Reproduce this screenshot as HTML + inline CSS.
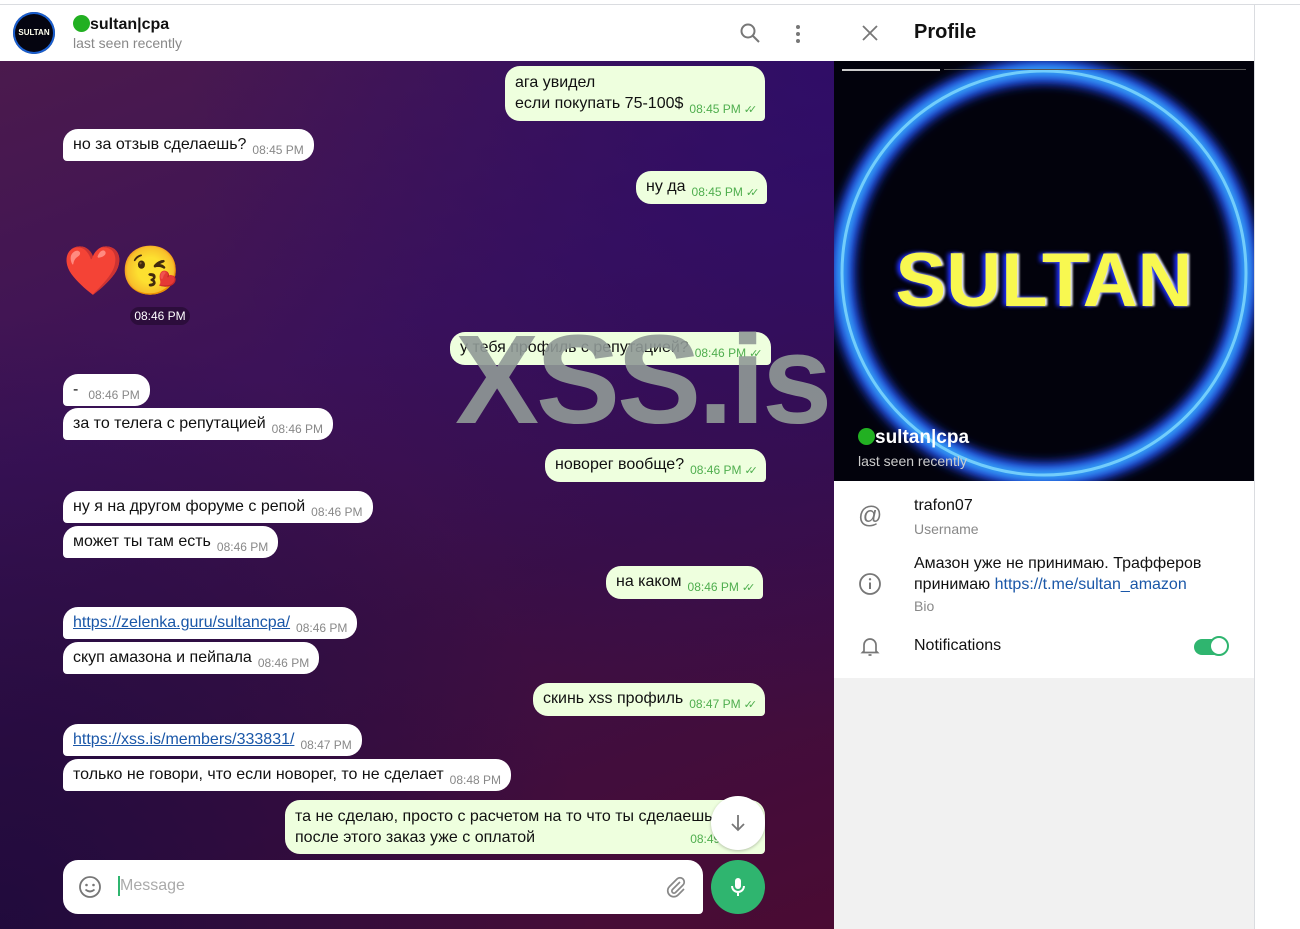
<!DOCTYPE html>
<html><head><meta charset="utf-8">
<style>
*{box-sizing:border-box;margin:0;padding:0}
body{width:1300px;height:929px;overflow:hidden;background:#fff;font-family:"Liberation Sans",Roboto,sans-serif;position:relative}
.abs{position:absolute}
#chat{left:0;top:61px;width:834px;height:868px;background:linear-gradient(160deg,#4b1a4d 0%,#3c1258 35%,#3a0f45 60%,#4a0b33 100%);overflow:hidden}
#chat::before{content:"";position:absolute;inset:0;background:radial-gradient(ellipse at 100% 0%,rgba(40,10,110,.7),transparent 55%),radial-gradient(ellipse at 0% 100%,rgba(25,10,60,.8),transparent 50%)}
.b{position:absolute;font-size:16px;line-height:21px;color:#111;padding:5px 10px;border-radius:15px;white-space:nowrap}
.in{background:#fff;border-bottom-left-radius:4px}
.out{background:#eeffde;border-bottom-right-radius:4px;padding-right:13px}
.t{font-size:12px;color:#888;margin-left:6px;position:relative;top:5px}
.out .t{color:#4fae4e}
.ck{font-size:11px;letter-spacing:-5px;margin-left:3px}
a{color:#1a57a8;text-decoration:underline}
.wm{position:absolute;left:455px;top:317px;font:bold 126px "Liberation Sans",sans-serif;color:#909a97;opacity:.9;letter-spacing:-3px;line-height:126px}
</style></head><body>
<div class="abs" style="left:0;top:4px;width:1300px;height:1px;background:#dadce0"></div>
<div class="abs" style="left:0;top:5px;width:834px;height:56px;background:#fff"></div>
<div class="abs" style="left:13px;top:12px;width:42px;height:42px;border-radius:50%;background:#050510;box-shadow:0 0 0 2px #1a5fd0 inset;color:#ffe;font:bold 8px 'Liberation Sans';text-align:center;line-height:42px">SULTAN</div>
<div class="abs" style="left:73px;top:15px;font-size:16px;font-weight:bold;color:#111"><span style="display:inline-block;width:17px;height:17px;border-radius:50%;background:#22b022;vertical-align:-3px"></span>sultan|cpa</div>
<div class="abs" style="left:73px;top:35px;font-size:14px;color:#888">last seen recently</div>
<svg class="abs" style="left:739px;top:22px" width="22" height="22" viewBox="0 0 22 22"><circle cx="9" cy="9" r="6.5" fill="none" stroke="#777" stroke-width="2"/><path d="M14 14l6 6" stroke="#777" stroke-width="2"/></svg>
<div class="abs" style="left:796px;top:25px;width:4px;height:4px;border-radius:50%;background:#777;box-shadow:0 7px 0 #777,0 14px 0 #777"></div>

<div id="chat" class="abs"></div>
<div class="b out" style="left:505px;top:66px;padding-top:6px">ага увидел<br>если покупать 75-100$<span class="t">08:45 PM<span class="ck">✓✓</span></span></div>
<div class="b in" style="left:63px;top:129px">но за отзыв сделаешь?<span class="t">08:45 PM</span></div>
<div class="b out" style="left:636px;top:171px">ну да<span class="t">08:45 PM<span class="ck">✓✓</span></span></div>
<div class="abs" style="left:63px;top:240px;font-size:48px;line-height:62px;font-family:'Noto Color Emoji',sans-serif;letter-spacing:-2px">❤️😘</div>
<div class="abs" style="left:130px;top:307px;width:60px;height:18px;border-radius:9px;background:rgba(0,0,0,.3);color:#fff;font-size:12px;text-align:center;line-height:18px">08:46 PM</div>
<div class="b out" style="left:450px;top:332px">у тебя профиль с репутацией?<span class="t">08:46 PM<span class="ck">✓✓</span></span></div>
<div class="b in" style="left:63px;top:374px">-<span class="t" style="margin-left:10px">08:46 PM</span></div>
<div class="b in" style="left:63px;top:408px">за то телега с репутацией<span class="t">08:46 PM</span></div>
<div class="b out" style="left:545px;top:449px">новорег вообще?<span class="t">08:46 PM<span class="ck">✓✓</span></span></div>
<div class="b in" style="left:63px;top:491px">ну я на другом форуме с репой<span class="t">08:46 PM</span></div>
<div class="b in" style="left:63px;top:526px">может ты там есть<span class="t">08:46 PM</span></div>
<div class="b out" style="left:606px;top:566px">на каком<span class="t">08:46 PM<span class="ck">✓✓</span></span></div>
<div class="b in" style="left:63px;top:607px"><a>https://zelenka.guru/sultancpa/</a><span class="t">08:46 PM</span></div>
<div class="b in" style="left:63px;top:642px">скуп амазона и пейпала<span class="t">08:46 PM</span></div>
<div class="b out" style="left:533px;top:683px">скинь xss профиль<span class="t">08:47 PM<span class="ck">✓✓</span></span></div>
<div class="b in" style="left:63px;top:724px"><a>https://xss.is/members/333831/</a><span class="t">08:47 PM</span></div>
<div class="b in" style="left:63px;top:759px">только не говори, что если новорег, то не сделает<span class="t">08:48 PM</span></div>
<div class="b out" style="left:285px;top:800px;width:480px;height:54px;padding-top:6px">та не сделаю, просто с расчетом на то что ты сделаешь<br>после этого заказ уже с оплатой<span style="position:absolute;right:12px;bottom:3px;font-size:12px;color:#4fae4e">08:49 PM<span class="ck">✓✓</span></span></div>
<div class="wm">XSS.is</div>
<div class="abs" style="left:711px;top:796px;width:54px;height:54px;border-radius:50%;background:#fff;box-shadow:0 1px 3px rgba(0,0,0,.25)"></div>
<svg class="abs" style="left:726px;top:811px" width="24" height="24" viewBox="0 0 24 24"><path d="M12 4v15M6 13l6 6 6-6" fill="none" stroke="#777" stroke-width="1.8"/></svg>
<div class="abs" style="left:63px;top:860px;width:640px;height:54px;background:#fff;border-radius:15px;border-bottom-right-radius:4px"></div>
<svg class="abs" style="left:78px;top:875px" width="24" height="24" viewBox="0 0 24 24"><circle cx="12" cy="12" r="10" fill="none" stroke="#777" stroke-width="1.8"/><circle cx="8.5" cy="10" r="1.3" fill="#777"/><circle cx="15.5" cy="10" r="1.3" fill="#777"/><path d="M7.5 14.5q4.5 4 9 0" fill="none" stroke="#777" stroke-width="1.8"/></svg>
<div class="abs" style="left:118px;top:876px;width:1.5px;height:20px;background:#2fb56f"></div>
<div class="abs" style="left:120px;top:877px;font-size:16px;color:#aaa">Message</div>
<svg class="abs" style="left:664px;top:875px" width="24" height="24" viewBox="0 0 24 24"><path d="M16 7l-7.5 7.5a2 2 0 0 0 3 3L19 10a4 4 0 0 0-6-6l-7.5 7.5a6 6 0 0 0 8.5 8.5L20 14" fill="none" stroke="#888" stroke-width="1.7"/></svg>
<div class="abs" style="left:711px;top:860px;width:54px;height:54px;border-radius:50%;background:#2fb56f"></div>
<svg class="abs" style="left:726px;top:875px" width="24" height="24" viewBox="0 0 24 24"><rect x="9" y="3" width="6" height="11" rx="3" fill="#fff"/><path d="M6 11a6 6 0 0 0 12 0M12 17v4" fill="none" stroke="#fff" stroke-width="2"/></svg>

<div class="abs" style="left:834px;top:5px;width:420px;height:924px;background:#f1f1f1"></div>
<div class="abs" style="left:1254px;top:5px;width:1px;height:924px;background:#dadce0"></div>
<div class="abs" style="left:834px;top:5px;width:420px;height:56px;background:#fff"></div>
<svg class="abs" style="left:860px;top:23px" width="20" height="20" viewBox="0 0 20 20"><path d="M3 3l14 14M17 3L3 17" stroke="#777" stroke-width="1.8"/></svg>
<div class="abs" style="left:914px;top:21px;font-size:20px;font-weight:bold;color:#111">Profile</div>
<div class="abs" style="left:834px;top:61px;width:420px;height:420px;background:#02020c;overflow:hidden">
 <svg class="abs" style="left:0;top:0" width="420" height="420"><defs><filter id="g"><feGaussianBlur stdDeviation="5"/></filter></defs>
  <circle cx="210" cy="212" r="202" fill="none" stroke="#1a3cdc" stroke-width="26" filter="url(#g)"/>
  <circle cx="210" cy="212" r="202" fill="none" stroke="#3cc6ff" stroke-width="9" filter="url(#g)"/>
  <circle cx="210" cy="212" r="202" fill="none" stroke="#8fe6ff" stroke-width="3" opacity=".7"/>
 </svg>
 <div class="abs" style="left:0;top:176px;width:420px;text-align:center;font:bold 76px 'Liberation Sans',sans-serif;color:#f8f850;text-shadow:-3px 0 4px #2030ff,2px 0 2px #fff">SULTAN</div>
 <div class="abs" style="left:8px;top:8px;width:98px;height:2px;background:#ccc"></div>
 <div class="abs" style="left:110px;top:8px;width:302px;height:1px;background:#555"></div>
 <div class="abs" style="left:24px;top:366px;font-size:19px;font-weight:bold;color:#fff"><span style="display:inline-block;width:17px;height:17px;border-radius:50%;background:#22b022;vertical-align:-2px"></span>sultan|cpa</div>
 <div class="abs" style="left:24px;top:392px;font-size:14px;color:#ccc">last seen recently</div>
</div>
<div class="abs" style="left:834px;top:481px;width:420px;height:197px;background:#fff"></div>
<div class="abs" style="left:858px;top:502px;font-size:24px;color:#777">@</div>
<div class="abs" style="left:914px;top:497px;font-size:16px;color:#111">trafon07</div>
<div class="abs" style="left:914px;top:521px;font-size:14px;color:#888">Username</div>
<svg class="abs" style="left:858px;top:572px" width="24" height="24" viewBox="0 0 24 24"><circle cx="12" cy="12" r="10" fill="none" stroke="#777" stroke-width="1.8"/><path d="M12 10.5v6.5" stroke="#777" stroke-width="2"/><circle cx="12" cy="7.3" r="1.2" fill="#777"/></svg>
<div class="abs" style="left:914px;top:553px;font-size:16px;line-height:21px;color:#111">Амазон уже не принимаю. Трафферов<br>принимаю <span style="color:#1a57a8">https://t.me/sultan_amazon</span></div>
<div class="abs" style="left:914px;top:598px;font-size:14px;color:#888">Bio</div>
<svg class="abs" style="left:858px;top:634px" width="24" height="24" viewBox="0 0 24 24"><path d="M6 17V11a6 6 0 0 1 12 0v6l1.5 1.5h-15zM10.5 21h3" fill="none" stroke="#777" stroke-width="1.7"/></svg>
<div class="abs" style="left:914px;top:637px;font-size:16px;color:#111">Notifications</div>
<div class="abs" style="left:1194px;top:639px;width:34px;height:16px;border-radius:8px;background:#2fb56f"></div>
<div class="abs" style="left:1209px;top:636px;width:20px;height:20px;border-radius:50%;background:#fff;border:2px solid #2fb56f"></div>
</body></html>
